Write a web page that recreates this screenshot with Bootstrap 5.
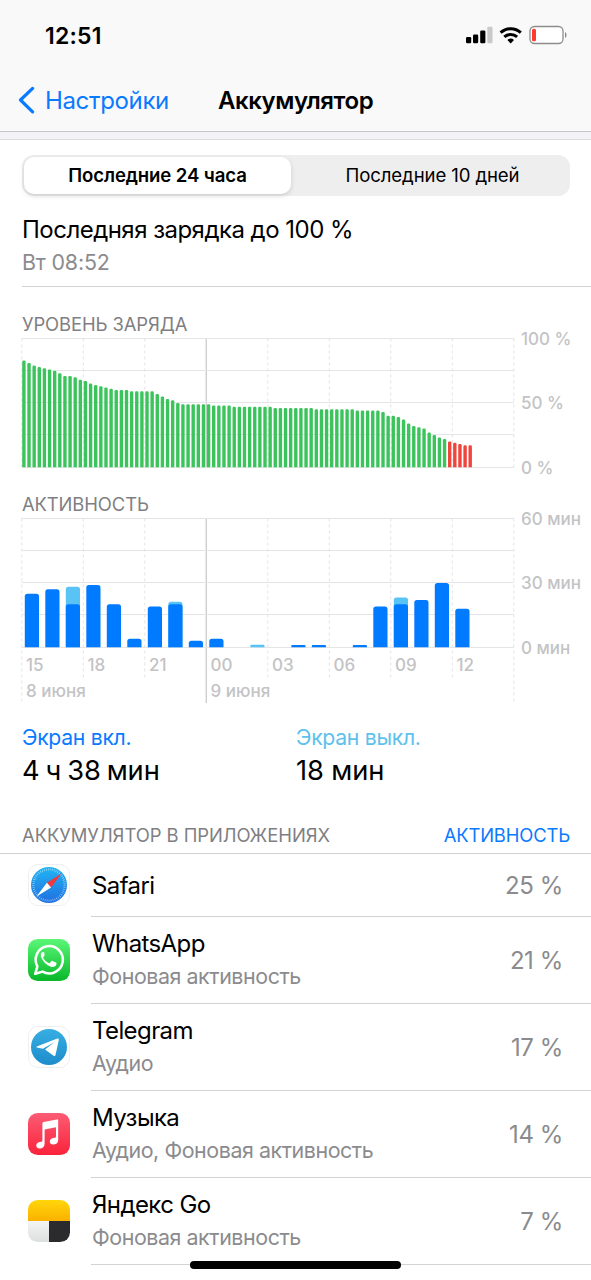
<!DOCTYPE html>
<html lang="ru">
<head>
<meta charset="utf-8">
<meta name="viewport" content="width=device-width, initial-scale=1">
<title>Аккумулятор</title>
<link href="https://cdn.jsdelivr.net/npm/bootstrap@5.3.0/dist/css/bootstrap.min.css" rel="stylesheet">
<style>
  body { font-family: Inter, "Liberation Sans", sans-serif; color: #000; background: #fff; width: 591px; height: 1280px; overflow: hidden; position: relative; }
  .topbar { background: #f9f9f9; border-bottom: 1px solid #c6c6ca; }
  .statusbar { height: 70px; padding: 0 23px 0 45px; }
  .clock { font-size: 23px; font-weight: 600; letter-spacing: .2px; padding-top: 2px; }
  .titlebar { height: 61px; padding-left: 18px; }
  .back { color: #0a7aff; font-size: 24px; text-decoration: none; width: 200px; letter-spacing: -.35px; }
  .back svg { margin-right: 10px; margin-bottom: 2px; }
  .page-title { font-size: 24px; font-weight: 600; letter-spacing: -.45px; }
  .strip { height: 8px; background: #f2f2f7; border-bottom: 1px solid #dcdce0; }
  .segmented { height: 41px; margin: 15px 21px 16px 22px; background: #eeeeef; border-radius: 12px; padding: 2px; font-size: 18.6px; letter-spacing: -.12px; }
  .segmented .seg { width: 50%; border-radius: 10px; padding: 1px 0 0; font-size: inherit; letter-spacing: inherit; border: 0; color: #000; }
  .segmented .off { padding-left: 6px; }
  .segmented .on { background: #fff; font-weight: 600; width: 267px; flex: none; box-shadow: 0 2px 5px rgba(0,0,0,.14); }
  .charge { padding-left: 22px; }
  .screen-on { width: 296px; }
  .body-text { font-size: 24px; line-height: 34px; letter-spacing: -.52px; padding-top: 1px; margin-bottom: -1px; }
  .sub-text { font-size: 21.4px; line-height: 32px; color: #8b8b8e; letter-spacing: -.15px; }
  .rule { height: 1px; background: #d3d3d5; margin: 8px 0 26px 22px; }
  .caption-text { font-size: 18.4px; line-height: 22px; color: #7f7f83; padding-left: 22px; letter-spacing: -.1px; }
  .chart { overflow: visible; }
  .chart text { font-size: 17px; font-weight: 500; fill: #c3c3c5; }
  .screen-label { font-size: 21.2px; line-height: 26px; letter-spacing: -.3px; }
  .screen-value { font-size: 27.3px; line-height: 42px; letter-spacing: -.1px; }
  .word-tight { word-spacing: -1.6px; }
  .blue { color: #0a7aff; }
  .sky { color: #5ec1ec; }
  .list-head { height: 30px; line-height: 24px; font-size: 18.4px; letter-spacing: -.04px; color: #7f7f83; margin-top: 31px; padding: 0 21px 0 22px; }
  .list-head .blue { letter-spacing: -.15px; }
  .apps { border-top: 1px solid #d0d0d3; }
  .app-row { padding-left: 28px; }
  .app-icon { width: 42px; height: 42px; flex: none; margin: 0 21px 2px 0; }
  .app-body { border-bottom: 1px solid #d3d3d5; height: 87px; padding: 0 28px 0 1px; }
  .app-body.short { height: 63px; }
  .app-name { font-size: 24px; line-height: 33px; letter-spacing: -.6px; }
  .app-note { font-size: 21.4px; line-height: 33px; color: #8b8b8e; letter-spacing: -.43px; }
  .share { font-size: 24px; color: #8b8b8e; letter-spacing: -.4px; padding-top: 2px; }
  .home-bar { position: absolute; left: 190px; top: 1261px; width: 211px; height: 8px; border-radius: 4px; background: #000; }
</style>
</head>
<body>
<header class="topbar">
  <div class="statusbar d-flex align-items-center justify-content-between">
    <span class="clock">12:51</span>
    <svg width="103" height="22" viewBox="465 24.500 103 22">
      <rect x="466" y="37.5" width="5.2" height="6.3" rx="1.2"/>
      <rect x="473" y="35" width="5.2" height="8.8" rx="1.2"/>
      <rect x="480.2" y="31" width="5.2" height="12.8" rx="1.2"/>
      <rect x="487.3" y="27.3" width="5.2" height="16.5" rx="1.2" fill="#c9c9c9"/>
      <g fill="none" stroke="#000" stroke-width="3">
        <path d="M500.6 33.2a14.6 14.6 0 0 1 20.2 0"/>
        <path d="M504.3 37.4a9.4 9.4 0 0 1 12.8 0"/>
      </g>
      <path d="M510.7 44l-3.3-3.5a5 5 0 0 1 6.6 0z"/>
      <rect x="530" y="27" width="33" height="17" rx="4.5" fill="#fff" stroke="#8d8d8d" stroke-width="1.3"/>
      <rect x="532" y="29.2" width="4" height="12.6" rx="1.6" fill="#ff3b30"/>
      <path d="M565 32.6c2 1 2 5 0 6z" fill="#8d8d8d"/>
    </svg>
  </div>
  <nav class="titlebar d-flex align-items-center">
    <a class="back d-flex align-items-center" href="#">
      <svg width="17" height="28" viewBox="0 0 17 28" fill="none" stroke="#0a7aff" stroke-width="3.2" stroke-linecap="round" stroke-linejoin="round"><path d="M14.6 2.4L2.5 14l12.1 11.8"/></svg>
      <span class="back-text">Настройки</span>
    </a>
    <span class="page-title">Аккумулятор</span>
  </nav>
</header>
<div class="strip"></div>

<main>
  <div class="segmented d-flex">
    <button class="seg on btn">Последние 24 часа</button>
    <button class="seg off btn flex-fill">Последние 10 дней</button>
  </div>
  <section class="charge">
    <div class="body-text">Последняя зарядка до 100 %</div>
    <div class="sub-text">Вт 08:52</div>
  </section>
  <div class="rule"></div>

  <div class="caption-text">УРОВЕНЬ ЗАРЯДА</div>
  <svg class="chart d-block" id="level" width="591" height="158" viewBox="0 335 591 158">
    <text x="521" y="345">100 %</text>
    <text x="521" y="409.400">50 %</text>
    <text x="521" y="473.600">0 %</text>
  </svg>

  <div class="caption-text">АКТИВНОСТЬ</div>
  <svg class="chart d-block" id="activity" width="591" height="209" viewBox="0 515 591 209">
    <text x="521" y="525">60 мин</text>
    <text x="521" y="589.400">30 мин</text>
    <text x="521" y="653.600">0 мин</text>
    <text x="26" y="697">8 июня</text>
    <text x="210.5" y="697">9 июня</text>
  </svg>

  <div class="d-flex">
    <div class="charge screen-on">
      <div class="screen-label blue">Экран вкл.</div>
      <div class="screen-value word-tight">4 ч 38 мин</div>
    </div>
    <div>
      <div class="screen-label sky">Экран выкл.</div>
      <div class="screen-value">18 мин</div>
    </div>
  </div>

  <div class="list-head d-flex justify-content-between"><span>АККУМУЛЯТОР В ПРИЛОЖЕНИЯХ</span><span class="blue">АКТИВНОСТЬ</span></div>
  <div class="apps">
    <div class="app-row d-flex align-items-center">
      <svg class="app-icon" viewBox="0 0 42 42">
        <defs><linearGradient id="gs" x2="0" y2="1"><stop stop-color="#22b5f3"/><stop offset="1" stop-color="#1f6fe0"/></linearGradient></defs>
        <rect x=".5" y=".5" width="41" height="41" rx="9.5" fill="#fff" stroke="#efeff0"/>
        <circle cx="21" cy="21" r="18" fill="url(#gs)"/>
        <circle cx="21" cy="21" r="15.6" fill="none" stroke="#fff" stroke-opacity=".65" stroke-width="2.2" stroke-dasharray=".6 1.4"/>
        <path d="M33.500 9.500L18.900 18.800l4.200 4.600z" fill="#f0383d"/>
        <path d="M8.500 32.500L18.900 18.800l4.200 4.600z" fill="#fff"/>
      </svg>
      <div class="app-body short flex-fill d-flex align-items-center justify-content-between">
        <div class="app-name">Safari</div><span class="share">25 %</span>
      </div>
    </div>
    <div class="app-row d-flex align-items-center">
      <svg class="app-icon" viewBox="0 0 42 42">
        <defs><linearGradient id="gw" x2="0" y2="1"><stop stop-color="#5bf777"/><stop offset="1" stop-color="#08b72a"/></linearGradient></defs>
        <rect width="42" height="42" rx="9.8" fill="url(#gw)"/>
        <path d="M7.200 34.800l2.200-7.400a13.600 13.600 0 1 1 5.200 5.200z" fill="none" stroke="#fff" stroke-width="2.500" stroke-linejoin="round"/>
        <path d="M16.3 13.6c-.5-1-1.8-.9-2.5 0-1 1.200-1.300 2.900-.6 4.700 1.700 4.400 5.200 7.900 9.800 9.400 2.200.7 4.500-.2 5.300-2 .4-1.100.3-1.800-.3-2.100l-3.500-1.700c-.5-.2-.9-.1-1.300.4l-1.300 1.600c-.3.4-.7.400-1.200.200-2.500-1.100-4.200-2.800-5.400-5-.3-.5-.2-.8.100-1.200l1-1.200c.2-.3.200-.6.100-.9z" fill="#fff"/>
      </svg>
      <div class="app-body flex-fill d-flex align-items-center justify-content-between">
        <div><div class="app-name">WhatsApp</div><div class="app-note">Фоновая активность</div></div><span class="share">21 %</span>
      </div>
    </div>
    <div class="app-row d-flex align-items-center">
      <svg class="app-icon" viewBox="0 0 42 42">
        <defs><linearGradient id="gt" x2="0" y2="1"><stop stop-color="#37aee2"/><stop offset="1" stop-color="#1e8ccb"/></linearGradient></defs>
        <rect x=".5" y=".5" width="41" height="41" rx="9.5" fill="#fff" stroke="#efeff0"/>
        <circle cx="21" cy="21" r="18" fill="url(#gt)"/>
        <path d="M8.800 20.600L29.300 12.500c1-.4 1.700.2 1.500 1.400l-3.300 15.200c-.2 1-.9 1.300-1.800.7l-8.700-6.300 9.400-7.300-11.600 6.600-5.900-1.300c-.6-.2-.6-.6-.1-.9z" fill="#fff"/>
      </svg>
      <div class="app-body flex-fill d-flex align-items-center justify-content-between">
        <div><div class="app-name">Telegram</div><div class="app-note">Аудио</div></div><span class="share">17 %</span>
      </div>
    </div>
    <div class="app-row d-flex align-items-center">
      <svg class="app-icon" viewBox="0 0 42 42">
        <defs><linearGradient id="gm" x2="0" y2="1"><stop stop-color="#fb5c74"/><stop offset="1" stop-color="#fa233b"/></linearGradient></defs>
        <rect width="42" height="42" rx="9.800" fill="url(#gm)"/>
        <path d="M14.400 10.600c0-.9.400-1.300 1.200-1.500l13.200-2.700c.9-.2 1.400.2 1.400 1.100v19.400c0 2.600-1.700 4.200-4.200 4.600-2.400.4-4.200-.8-4.200-2.900 0-1.900 1.200-3 3.300-3.500l1.900-.4c.7-.2 1-.5 1-1.200v-9.300l-11.400 2.300v14.300c0 2.700-1.600 4.300-4.100 4.700-2.400.4-4.200-.8-4.200-2.900 0-1.900 1.200-3.100 3.300-3.500l1.800-.4c.7-.2 1-.6 1-1.300z" fill="#fff"/>
      </svg>
      <div class="app-body flex-fill d-flex align-items-center justify-content-between">
        <div><div class="app-name">Музыка</div><div class="app-note">Аудио, Фоновая активность</div></div><span class="share">14 %</span>
      </div>
    </div>
    <div class="app-row d-flex align-items-center">
      <svg class="app-icon" viewBox="0 0 42 42">
        <defs>
          <linearGradient id="gy" x2="0" y2="1"><stop stop-color="#ffd60a"/><stop offset="1" stop-color="#fbb100"/></linearGradient>
          <linearGradient id="gg" x2="0" y2="1"><stop stop-color="#f4f5f5"/><stop offset="1" stop-color="#dcdfdf"/></linearGradient>
          <clipPath id="cy"><rect width="42" height="42" rx="9.800"/></clipPath>
        </defs>
        <g clip-path="url(#cy)">
          <rect width="42" height="21" fill="url(#gy)"/>
          <rect y="21" width="21" height="21" fill="url(#gg)"/>
          <rect x="21" y="21" width="21" height="21" fill="#2b2b2e"/>
        </g>
      </svg>
      <div class="app-body flex-fill d-flex align-items-center justify-content-between">
        <div><div class="app-name">Яндекс Go</div><div class="app-note">Фоновая активность</div></div><span class="share">7 %</span>
      </div>
    </div>
  </div>
</main>
<div class="home-bar"></div>

<script src="https://cdn.jsdelivr.net/npm/bootstrap@5.3.0/dist/js/bootstrap.bundle.min.js"></script>
<script>
  const levels = [83,81,79,78,77,76,75,73,71,71,70,68,67,65,64,63,62,61,60,60,60,59,59,59,59,59,57,55,53,52,50,
    49,49,49,49,49,49,48,48,48,48,47,47,47,47,47,47,47,47,46,46,46,46,46,46,46,46,45,45,45,45,45,45,45,45,
    44,44,44,44,44,43,40,40,39,37,34,32,31,30,27,25,23,22,20,19,18,17,17];
  // [screen on, screen off] minutes for each hour from 15:00
  const hours = [[25,0],[27,0],[20,8],[29,0],[20,0],[4,0],[19,0],[20,1],[3,0],[4,0],[0,0],[0,1],[0,0],[1,0],[1,0],
    [0,0],[1,0],[19,0],[20,3],[22,0],[30,0],[18,0]];
  const left = 21.8, right = 514, step = 61.5, tall = 128.6;

  function grid(top, tail, ends) {
    let s = '';
    for (let k = 0; k <= 8; k++) {
      const x = left + k * step, solid = k === 3;
      const bottom = top + tall + (k === 0 || k === 8 || solid ? ends : tail);
      s += `<path d="M${x} ${top}V${bottom}" stroke="${solid ? '#cfcfd1' : '#e3e3e5'}" stroke-width="${solid ? 1.4 : 1}" ${solid ? '' : 'stroke-dasharray="3 3"'}/>`;
    }
    for (let k = 0; k <= 4; k++) {
      const y = Math.floor(top + k * tall / 4) + .5;
      s += `<path d="M${left} ${y}H${right}" stroke="#e5e5e7"/>`;
    }
    return s;
  }
  const bar = (x, top, w, base, r, fill) =>
    `<path d="M${x} ${base}V${top + r}q0 ${-r} ${r} ${-r}h${w - 2 * r}q${r} 0 ${r} ${r}V${base}z" fill="${fill}"/>`;

  let s = grid(338.5, 0, 0);
  levels.forEach((v, i) => {
    s += bar(left + .4 + i * 5.13, 467.2 - v * 1.286, 3.4, 467.2, 1.3, v <= 20 ? '#f0453c' : '#3cc45c');
  });
  document.getElementById('level').insertAdjacentHTML('afterbegin', s);

  s = grid(518.5, 33, 56);
  hours.forEach(([on, off], i) => {
    const x = left + 3 + i * 20.5, base = 647.2, k = 2.143;
    if (off) s += bar(x, base - (on + off) * k - .4, 14.2, base, on ? 2.6 : 1.2, '#5ac3f5');
    if (on) s += bar(x, base - on * k, 14.2, base, on > 2 ? 2.6 : 1, '#007aff');
  });
  ['15','18','21','00','03','06','09','12'].forEach((h, i) => {
    s += `<text x="${26 + i * step}" y="670.7">${h}</text>`;
  });
  document.getElementById('activity').insertAdjacentHTML('afterbegin', s);
</script>
</body>
</html>
